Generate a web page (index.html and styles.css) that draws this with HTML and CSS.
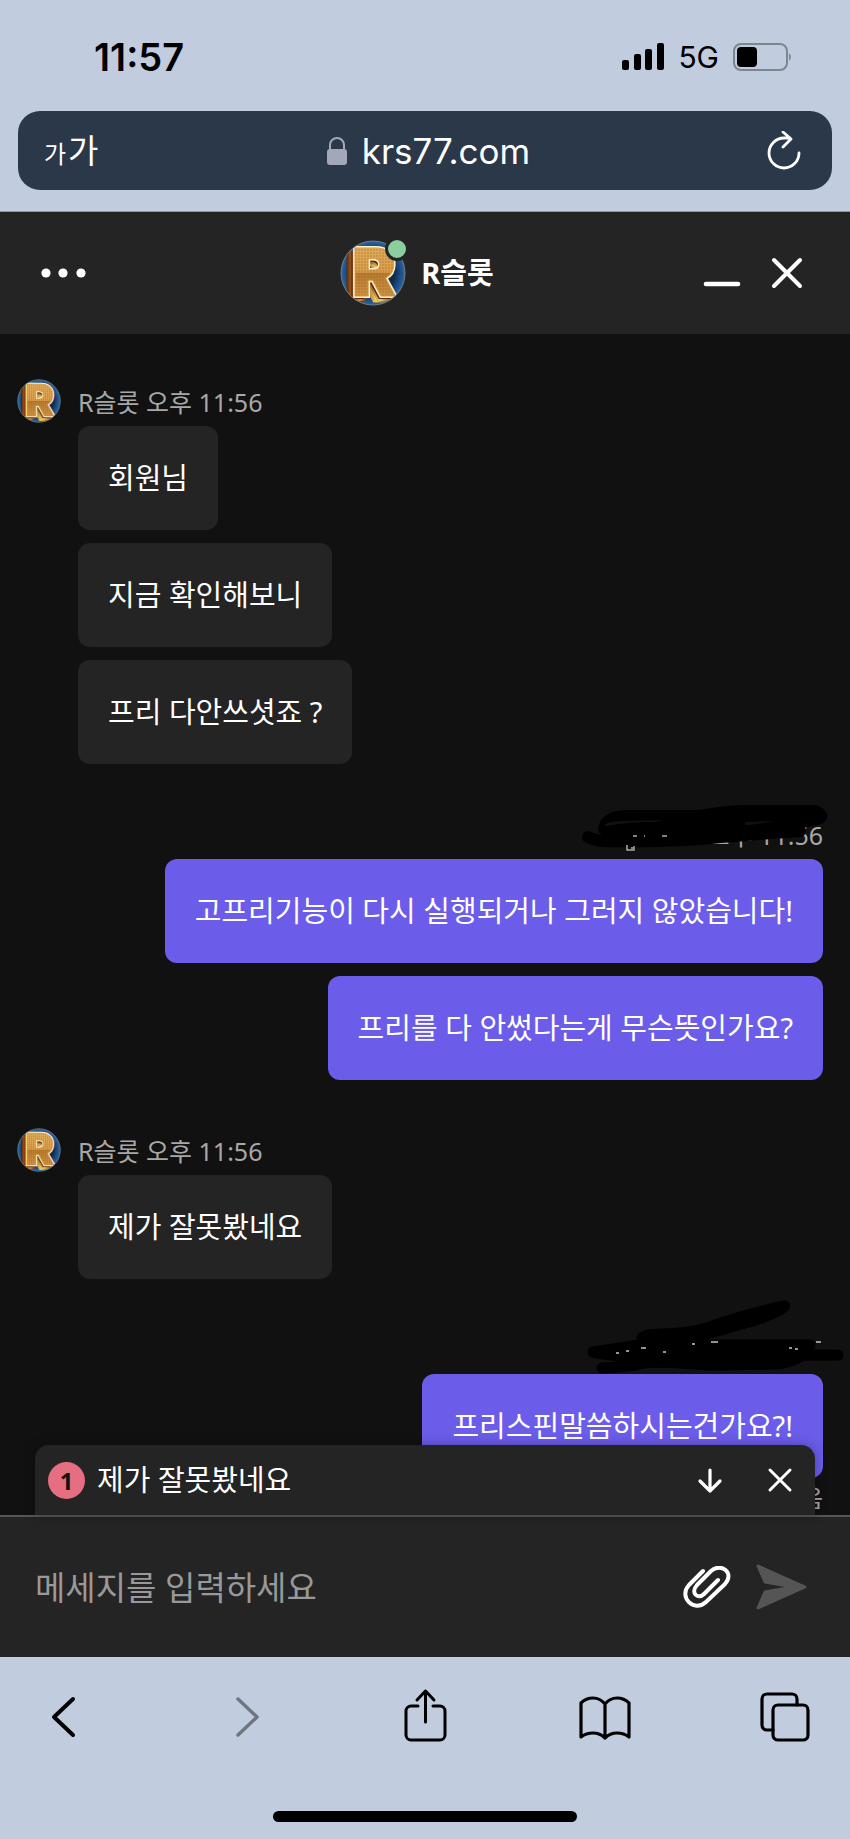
FILE: index.html
```html
<!DOCTYPE html>
<html lang="ko">
<head>
<meta charset="utf-8">
<meta name="viewport" content="width=device-width, initial-scale=1">
<title>R슬롯</title>
<link rel="stylesheet" href="styles.css">
</head>
<body>
<svg class="defs" aria-hidden="true">
  <defs>
    <linearGradient id="gold" x1="0" y1="0" x2="0" y2="1">
      <stop offset="0" stop-color="#e2b568"/>
      <stop offset=".5" stop-color="#d99d49"/>
      <stop offset=".52" stop-color="#b97a2f"/>
      <stop offset="1" stop-color="#dda550"/>
    </linearGradient>
    <linearGradient id="edge" x1="0" y1="0" x2="1" y2="0">
      <stop offset="0" stop-color="#4a1a08"/>
      <stop offset=".25" stop-color="#d98a30"/>
      <stop offset=".4" stop-color="#6a2c0c"/>
      <stop offset=".7" stop-color="#f1d060"/>
      <stop offset="1" stop-color="#7a3a10"/>
    </linearGradient>
    <radialGradient id="sky">
      <stop offset="0" stop-color="#081a30"/>
      <stop offset=".65" stop-color="#0c2c50"/>
      <stop offset="1" stop-color="#2e6cae"/>
    </radialGradient>
    <pattern id="mesh" width="3" height="3" patternUnits="userSpaceOnUse">
      <circle cx="1" cy="1" r=".8" fill="#8d5a22" opacity=".55"/>
    </pattern>
    <clipPath id="disc"><circle cx="33" cy="33" r="32"/></clipPath>
    <symbol id="avatar" viewBox="0 0 66 66">
      <g clip-path="url(#disc)">
        <circle cx="33" cy="33" r="33" fill="url(#sky)"/>
        <g class="logo-letter">
          <text x="5" y="61" fill="url(#edge)" stroke="url(#edge)" stroke-width="3">R</text>
          <text x="9" y="60" fill="#5a250b" stroke="url(#edge)" stroke-width="2">R</text>
          <text x="12" y="56" fill="url(#gold)" stroke="#fff0c8" stroke-width="4">R</text>
          <text x="12" y="56" fill="url(#gold)" stroke="#d9a04c" stroke-width="1">R</text>
          <text x="12" y="56" fill="url(#mesh)">R</text>
        </g>
      </g>
      <circle cx="33" cy="33" r="32" fill="none" stroke="#6d7f8d" stroke-width="1"/>
    </symbol>
  </defs>
</svg>

<div class="screen">
  <div class="browser-top">
    <div class="status-bar">
      <time class="clock">11:57</time>
      <div class="signals">
        <svg width="42" height="27" viewBox="0 0 42 27" aria-hidden="true">
          <rect x="0" y="17" width="7" height="10" rx="2"/><rect x="12" y="11" width="7" height="16" rx="2"/><rect x="23" y="6" width="7" height="21" rx="2"/><rect x="35" y="0" width="7" height="27" rx="2"/>
        </svg>
        <span class="network">5G</span>
        <svg width="60" height="28" viewBox="0 0 60 28" aria-hidden="true">
          <rect x="1" y="1" width="53" height="26" rx="7" fill="none" stroke="#7d8590" stroke-width="2"/>
          <rect x="4" y="4" width="20" height="20" rx="4"/>
          <path d="M56 10q4 4 0 8z" fill="#7d8590"/>
        </svg>
      </div>
    </div>
    <div class="address-bar">
      <button class="text-size" aria-label="글자 크기"><span class="small">가</span><span class="large">가</span></button>
      <button class="address">
        <svg width="20" height="28" viewBox="0 0 20 28" aria-hidden="true">
          <rect x="0" y="12" width="20" height="16" rx="3" fill="#a2a8b8"/>
          <path d="M3 13V8a7 7 0 0 1 14 0v5" fill="none" stroke="#a2a8b8" stroke-width="2"/>
        </svg>
        <span>krs77.com</span>
      </button>
      <button class="reload" aria-label="새로 고침">
        <svg width="34" height="40" viewBox="0 0 34 40" fill="none" stroke="#fff" stroke-width="2.8" stroke-linecap="round" stroke-linejoin="round">
          <path d="M32 22a15 15 0 1 1-15-15h6M16 1l8 7-8 8"/>
        </svg>
      </button>
    </div>
  </div>

  <header class="chat-header">
    <button class="menu" aria-label="메뉴">
      <svg width="46" height="12" viewBox="0 0 46 12" fill="#fff"><circle cx="6" cy="6" r="4.6"/><circle cx="23" cy="6" r="4.6"/><circle cx="41" cy="6" r="4.6"/></svg>
    </button>
    <div class="brand">
      <div class="brand-avatar">
        <svg width="66" height="66" aria-hidden="true"><use href="#avatar"/></svg>
        <span class="online"></span>
      </div>
      <h1>R슬롯</h1>
    </div>
    <div class="window-actions">
      <button aria-label="최소화">
        <svg width="38" height="32" viewBox="0 0 38 32" stroke="#fff" stroke-width="4.6" stroke-linecap="round"><path d="M3 27h32"/></svg>
      </button>
      <button aria-label="닫기">
        <svg width="32" height="32" viewBox="0 0 32 32" stroke="#fff" stroke-width="4" stroke-linecap="round"><path d="M3 3l26 26M29 3L3 29"/></svg>
      </button>
    </div>
  </header>

  <main class="chat">
    <section class="group incoming">
      <svg class="avatar" width="44" height="44" aria-hidden="true"><use href="#avatar"/></svg>
      <div class="meta">R슬롯 오후 11:56</div>
      <div class="bubbles">
        <p class="bubble">회원님</p>
        <p class="bubble">지금 확인해보니</p>
        <p class="bubble">프리 다안쓰셧죠 ?</p>
      </div>
    </section>

    <section class="group outgoing">
      <div class="meta">오후 11:56
        <svg class="scribble over-time" width="290" height="100" viewBox="0 0 290 100" aria-hidden="true">
          <g fill="none" stroke="#000" stroke-width="12" stroke-linecap="round" stroke-linejoin="round">
            <path d="M28 57Q38 62 48 61Q120 62 160 57L240 51M44 49Q46 37 66 36L140 36Q165 31 190 31L255 31Q266 36 258 39Q230 45 190 51L48 54"/>
            <path d="M48 47L180 46L100 54M150 37L250 34M66 52L182 51"/>
          </g>
          <path d="M44 45Q50 41 64 41L104 40L94 42Q66 42 46 46z" fill="#111"/>
          <path d="M67 65v5h7v-4M72 67v2M73 56h4M84 56h1M102 56h5" fill="none" stroke="#aaa" stroke-width="1.5"/>
        </svg>
      </div>
      <div class="bubbles">
        <p class="bubble">고프리기능이 다시 실행되거나 그러지 않았습니다!</p>
        <p class="bubble">프리를 다 안썼다는게 무슨뜻인가요?</p>
      </div>
    </section>

    <section class="group incoming">
      <svg class="avatar" width="44" height="44" aria-hidden="true"><use href="#avatar"/></svg>
      <div class="meta">R슬롯 오후 11:56</div>
      <div class="bubbles">
        <p class="bubble">제가 잘못봤네요</p>
      </div>
    </section>

    <section class="group outgoing">
      <div class="meta">
        <svg class="scribble over-name" width="290" height="100" viewBox="0 0 290 100" aria-hidden="true">
          <g fill="none" stroke="#000" stroke-width="11" stroke-linecap="round" stroke-linejoin="round">
            <path d="M33 71L80 64L250 64M42 87Q75 86 90 80L150 84L218 83Q235 80 242 74L278 74M82 57Q85 53 100 53Q135 52 155 44Q190 32 225 25Q215 34 185 42L130 58L82 64"/>
            <path d="M36 72L65 76L245 74M90 60L130 56M70 82L230 78M80 70H248"/>
          </g>
          <path d="M56 72h3M66 70h3M81 67h5M132 63h3M151 61h7M229 67h3M235 68h3M256 61h5M103 71h3" stroke="#c4c4c4" stroke-width="1.5"/>
        </svg>
      </div>
      <div class="bubbles">
        <p class="bubble">프리스핀말씀하시는건가요?!</p>
      </div>
      <div class="receipt">읽음</div>
    </section>

    <aside class="new-message">
      <span class="count">1</span>
      <span class="preview">제가 잘못봤네요</span>
      <button aria-label="아래로">
        <svg width="28" height="28" viewBox="0 0 28 28" fill="none" stroke="#fff" stroke-width="3.2" stroke-linecap="round" stroke-linejoin="round"><path d="M14 4v21M4 15l10 10 10-10"/></svg>
      </button>
      <button aria-label="알림 닫기">
        <svg width="28" height="28" viewBox="0 0 28 28" stroke="#fff" stroke-width="3" stroke-linecap="round"><path d="M4 4l20 20M24 4L4 24"/></svg>
      </button>
    </aside>
  </main>

  <form class="composer">
    <input type="text" aria-label="메세지" placeholder="메세지를 입력하세요">
    <button type="button" aria-label="파일 첨부">
      <svg width="48" height="42" viewBox="0 0 48 42" fill="none" stroke="#fff" stroke-width="4" stroke-linecap="round" stroke-linejoin="round">
        <path d="M20 5L6 19C-5 31 11 47 23 36L42 18C52 7 38-4 28 5L14 19C7 27 15 34 21 28L35 14"/>
      </svg>
    </button>
    <button type="submit" aria-label="보내기" disabled>
      <svg width="52" height="48" viewBox="0 0 52 48" fill="#555" stroke="#555" stroke-width="3" stroke-linejoin="round"><path d="M3 3L50 24L3 45L10 29L38 24L10 19z"/></svg>
    </button>
  </form>

  <nav class="browser-bottom">
    <div class="tools">
      <button aria-label="뒤로"><svg viewBox="0 0 60 60" stroke-width="4"><path d="M40 12L21 30L40 48"/></svg></button>
      <button aria-label="앞으로" disabled><svg viewBox="0 0 60 60" stroke-width="3.5"><path d="M25 12L44 30L25 48"/></svg></button>
      <button aria-label="공유"><svg viewBox="0 0 60 60" stroke-width="3"><path d="M24 19H17a5 5 0 0 0-5 5V48a5 5 0 0 0 5 5H46a5 5 0 0 0 5-5V24a5 5 0 0 0-5-5H39M31.500 35V4M23 13L31.500 4L40 13"/></svg></button>
      <button aria-label="책갈피"><svg viewBox="0 0 60 60" stroke-width="3.2"><path d="M31 17Q26 11 19 11Q12 11 7 16V50Q12 46 19 46Q26 46 31 51Q36 46 43 46Q50 46 55 50V16Q50 11 43 11Q36 11 31 17V51"/></svg></button>
      <button aria-label="탭"><svg viewBox="0 0 60 60" stroke-width="3.2"><rect x="19" y="18" width="35" height="35" rx="5"/><path d="M43 18V12a5 5 0 0 0-5-5H13a5 5 0 0 0-5 5V38a5 5 0 0 0 5 5H19"/></svg></button>
    </div>
    <div class="home-indicator"></div>
  </nav>
</div>
</body>
</html>
```

FILE: styles.css
```css
* { box-sizing: border-box; }

body {
  margin: 0;
  background: #111;
  color: #fff;
  font-family: "Noto Sans", "Noto Sans CJK KR", sans-serif;
}

button {
  padding: 0;
  border: 0;
  background: none;
  color: inherit;
  font: inherit;
}

svg { display: block; }

.defs {
  position: absolute;
  width: 0;
  height: 0;
}

.logo-letter {
  font-family: Inter, sans-serif;
  font-size: 66px;
  font-weight: 900;
}

.screen {
  display: flex;
  flex-direction: column;
  min-height: 100vh;
}

/* Browser top */
.browser-top {
  padding: 0 18px 21px;
  background: #c1cdde;
  border-bottom: 1px solid #8f9aa8;
  color: #000;
}

.status-bar {
  display: flex;
  justify-content: space-between;
  align-items: center;
  height: 111px;
  padding: 2px 39px 0 76px;
}

.clock {
  font-family: Inter, sans-serif;
  font-size: 38px;
  font-weight: 600;
}

.signals {
  display: flex;
  align-items: center;
  gap: 14px;
}

.network {
  font-family: Inter, sans-serif;
  font-size: 30px;
}

.address-bar {
  display: grid;
  grid-template-columns: 1fr auto 1fr;
  align-items: center;
  height: 79px;
  padding: 0 31px 0 26px;
  border-radius: 22px;
  background: #2b384a;
  color: #fff;
}

.text-size {
  justify-self: start;
  display: flex;
  align-items: baseline;
  gap: 2px;
  font-family: "Noto Sans CJK KR", sans-serif;
  line-height: 40px;
}

.small { font-size: 24px; }
.large { font-size: 33px; }

.address {
  display: flex;
  align-items: center;
  gap: 15px;
  padding-left: 12px;
  font-family: Inter, sans-serif;
  font-size: 35px;
}

.reload { justify-self: end; }

/* Chat header */
.chat-header {
  display: grid;
  grid-template-columns: 1fr auto 1fr;
  align-items: center;
  height: 122px;
  padding: 0 47px 0 40px;
  background: #242424;
}

.menu { justify-self: start; }

.brand {
  display: flex;
  align-items: center;
  gap: 15px;
  padding-right: 9px;
}

.brand h1 {
  margin: 0;
  font-size: 29px;
  line-height: 40px;
}

.brand-avatar { position: relative; }

.online {
  position: absolute;
  top: -3px;
  right: -3px;
  width: 24px;
  height: 24px;
  border: 3px solid #242424;
  border-radius: 50%;
  background: #8bce9f;
}

.window-actions {
  justify-self: end;
  display: flex;
  gap: 30px;
}

/* Messages */
.chat {
  position: relative;
  display: flex;
  flex: 1;
  flex-direction: column;
  gap: 48px;
  padding: 45px 27px 0 17px;
  background: #111;
}

.group {
  display: grid;
  row-gap: 3px;
}

.incoming {
  grid-template-columns: 44px 1fr;
  column-gap: 17px;
}

.incoming .bubbles { grid-column: 2; }

.meta {
  position: relative;
  height: 44px;
  color: #a8a8a8;
  font-size: 25px;
  line-height: 46px;
}

.outgoing .meta { text-align: right; }

.scribble {
  position: absolute;
  right: -27px;
}

.over-time { bottom: -24px; }
.over-name { bottom: -10px; }

.bubbles {
  display: flex;
  flex-direction: column;
  align-items: flex-start;
  gap: 13px;
}

.outgoing .bubbles { align-items: flex-end; }

.bubble {
  margin: 0;
  padding: 30px;
  border-radius: 12px;
  background: #242424;
  font-size: 29px;
  line-height: 44px;
}

.outgoing .bubble { background: #6b5ce9; }

.receipt {
  color: #a8a8a8;
  font-size: 24px;
  line-height: 34px;
  text-align: right;
}

.new-message {
  position: absolute;
  right: 35px;
  bottom: 0;
  left: 35px;
  display: flex;
  align-items: center;
  height: 70px;
  padding: 0 21px 0 13px;
  border-radius: 14px 14px 0 0;
  background: #242424;
  box-shadow: 0 0 12px rgba(0, 0, 0, .3);
}

.new-message button + button { margin-left: 42px; }

.count {
  width: 37px;
  height: 37px;
  margin-right: 12px;
  border-radius: 50%;
  background: #e66e82;
  color: #111;
  font-size: 24px;
  font-weight: 700;
  line-height: 37px;
  text-align: center;
}

.preview {
  flex: 1;
  font-size: 29px;
  line-height: 44px;
}

/* Composer */
.composer {
  display: flex;
  align-items: center;
  height: 142px;
  padding: 0 43px 0 35px;
  border-top: 2px solid #555;
  background: #242424;
}

.composer input {
  flex: 1;
  min-width: 0;
  padding: 0;
  border: 0;
  outline: 0;
  background: none;
  color: #fff;
  font: inherit;
  font-size: 33px;
}

.composer input::placeholder { color: #999; }

.composer button + button { margin-left: 24px; }

/* Browser bottom */
.browser-bottom {
  height: 182px;
  padding-top: 30px;
  background: #c1cdde;
}

.tools {
  display: flex;
  justify-content: space-between;
  padding: 0 36px 0 33px;
}

.tools svg {
  width: 60px;
  height: 60px;
  fill: none;
  stroke: #000;
  stroke-linecap: round;
  stroke-linejoin: round;
}

.tools button:disabled svg { stroke: #6f7680; }

.home-indicator {
  width: 304px;
  height: 11px;
  margin: 64px auto 0;
  border-radius: 6px;
  background: #000;
}
```
